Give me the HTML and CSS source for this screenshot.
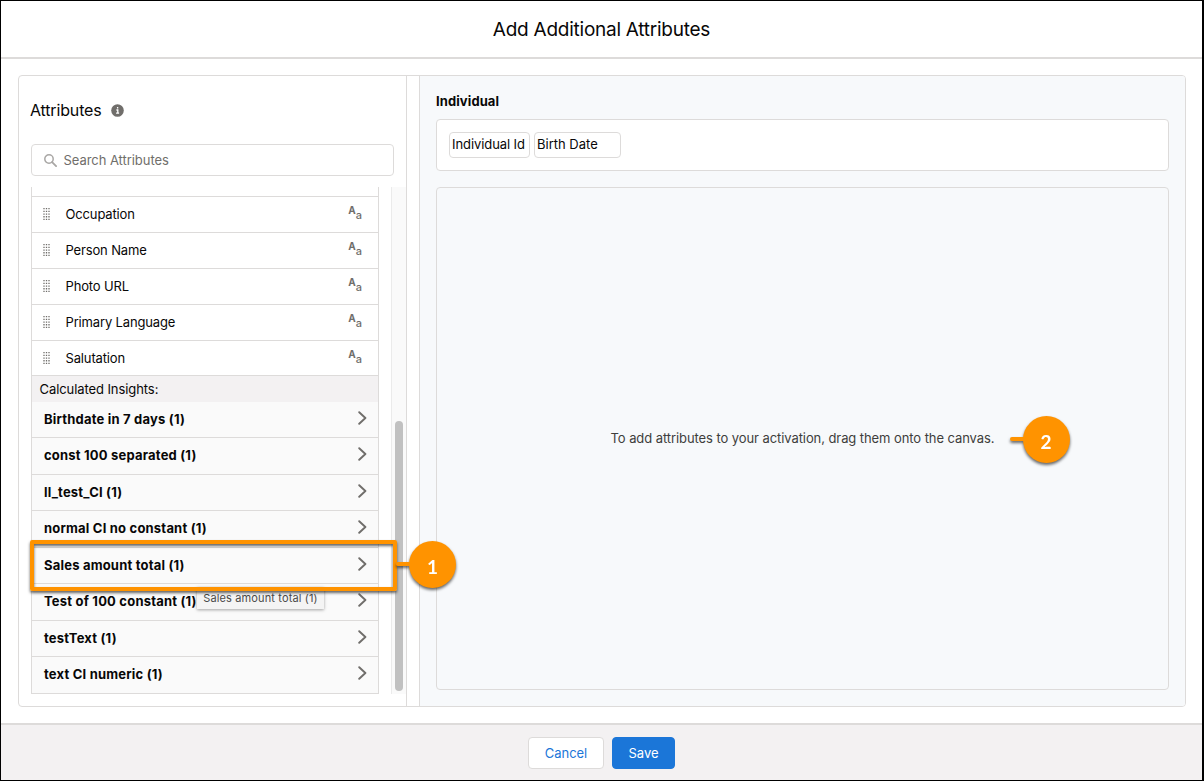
FILE: index.html
```html
<!DOCTYPE html>
<html lang="en">
<head>
    <meta charset="UTF-8">
    <meta name="viewport" content="width=device-width, initial-scale=1.0">
    <title>Add Additional Attributes</title>
    <link rel="stylesheet" href="styles.css">
</head>
<body>
    <!-- shared icons -->
    <svg class="sprite">
        <symbol id="grip" viewBox="0 0 7 13">
            <path d="M1 1v12M3.5 1v12M6 1v12" stroke="#706e6b" stroke-width="1.3" stroke-dasharray="1.3 1.4"/>
        </symbol>
        <symbol id="chevron" viewBox="0 0 9 14">
            <path d="M1.2 1.2 7.4 7l-6.2 5.8" fill="none" stroke="#706e6b" stroke-width="1.9" stroke-linecap="round" stroke-linejoin="round"/>
        </symbol>
    </svg>

    <div class="modal">
        <header class="modal-header">
            <h1>Add Additional Attributes</h1>
        </header>

        <main class="modal-body">
            <div class="panel">
                <section class="attributes">
                    <div class="attributes-title">
                        <h2>Attributes</h2>
                        <svg class="info" viewBox="0 0 13 13">
                            <circle cx="6.5" cy="6.5" r="6.3" fill="#706e6b"/>
                            <path d="M6.6 3v1.6M5.4 6h1.4v3M5.1 9.2h3" fill="none" stroke="#fff" stroke-width="1.3"/>
                        </svg>
                    </div>
                    <div class="search">
                        <svg viewBox="0 0 13 13">
                            <circle cx="5" cy="5" r="4.2" fill="none" stroke="#a9a7a5" stroke-width="1.5"/>
                            <path d="M8.1 8.1l4 4" stroke="#a9a7a5" stroke-width="1.8" stroke-linecap="round"/>
                        </svg>
                        <span>Search Attributes</span>
                    </div>
                    <div class="scroller">
                        <div class="list">
                            <div class="row row-cut"></div>
                            <div class="row"><svg class="grip"><use href="#grip"/></svg><span>Occupation</span><span class="type"><b>A</b><i>a</i></span></div>
                            <div class="row"><svg class="grip"><use href="#grip"/></svg><span>Person Name</span><span class="type"><b>A</b><i>a</i></span></div>
                            <div class="row"><svg class="grip"><use href="#grip"/></svg><span>Photo URL</span><span class="type"><b>A</b><i>a</i></span></div>
                            <div class="row"><svg class="grip"><use href="#grip"/></svg><span>Primary Language</span><span class="type"><b>A</b><i>a</i></span></div>
                            <div class="row row-last"><svg class="grip"><use href="#grip"/></svg><span>Salutation</span><span class="type"><b>A</b><i>a</i></span></div>
                            <div class="group-label">Calculated Insights:</div>
                            <div class="insight"><span>Birthdate in 7 days (1)</span><svg class="chevron"><use href="#chevron"/></svg></div>
                            <div class="insight"><span>const 100 separated (1)</span><svg class="chevron"><use href="#chevron"/></svg></div>
                            <div class="insight"><span>ll_test_CI (1)</span><svg class="chevron"><use href="#chevron"/></svg></div>
                            <div class="insight"><span>normal CI no constant (1)</span><svg class="chevron"><use href="#chevron"/></svg></div>
                            <div class="insight selected">
                                <span>Sales amount total (1)</span><svg class="chevron"><use href="#chevron"/></svg>
                                <div class="tooltip">Sales amount total (1)</div>
                                <div class="highlight"></div>
                                <div class="callout callout-one"><div class="badge">1</div></div>
                            </div>
                            <div class="insight"><span>Test of 100 constant (1)</span><svg class="chevron"><use href="#chevron"/></svg></div>
                            <div class="insight"><span>testText (1)</span><svg class="chevron"><use href="#chevron"/></svg></div>
                            <div class="insight"><span>text CI numeric (1)</span><svg class="chevron"><use href="#chevron"/></svg></div>
                        </div>
                        <div class="track"><div class="thumb"></div></div>
                    </div>
                </section>

                <section class="canvas">
                    <h3>Individual</h3>
                    <div class="fields">
                        <span class="pill">Individual Id</span>
                        <span class="pill pill-wide">Birth Date</span>
                    </div>
                    <div class="dropzone">
                        <p>To add attributes to your activation, drag them onto the canvas.</p>
                        <div class="callout callout-two"><div class="badge">2</div></div>
                    </div>
                </section>
            </div>
        </main>

        <footer class="modal-footer">
            <button class="btn">Cancel</button>
            <button class="btn btn-brand">Save</button>
        </footer>
    </div>
</body>
</html>
```
FILE: styles.css
```css
* {
    box-sizing: border-box;
}
body {
    margin: 0;
    font-family: Inter, "Liberation Sans", sans-serif;
    font-size: 13px;
    color: #080707;
}
h1, h2, h3, p {
    margin: 0;
    font-weight: 400;
}
.sprite {
    display: none;
}
.modal {
    display: flex;
    flex-direction: column;
    height: 781px;
    border: 1px solid #000;
    border-right-width: 2px;
    background: #fff;
    overflow: hidden;
}
.modal-header {
    height: 58px;
    border-bottom: 2px solid #dddbda;
    display: flex;
    align-items: center;
    justify-content: center;
}
.modal-header h1 {
    font-size: 19px;
    letter-spacing: -0.25px;
}
.modal-body {
    flex: 1;
    padding: 16px 16px 16px 17px;
}
.panel {
    height: 632px;
    display: flex;
    gap: 12px;
    border: 1px solid #dddbda;
    border-radius: 4px;
    overflow: hidden;
}

/* left side */
.attributes {
    width: 388px;
    border-right: 1px solid #dddbda;
    padding: 24px 0 0 12px;
}
.attributes-title {
    display: flex;
    align-items: center;
    gap: 9px;
    height: 20px;
}
.attributes-title h2 {
    margin-left: -1px;
    font-size: 16px;
    letter-spacing: -0.15px;
}
.info {
    width: 13px;
    height: 13px;
}
.search {
    display: flex;
    align-items: center;
    gap: 7px;
    width: 363px;
    height: 32px;
    margin-top: 24px;
    padding-left: 11.5px;
    border: 1px solid #dddbda;
    border-radius: 4px;
    color: #706e6b;
    letter-spacing: -0.05px;
}
.search svg {
    width: 13px;
    height: 13px;
}
.scroller {
    display: flex;
    gap: 12px;
    height: 507px;
    margin-top: 11px;
}
.list {
    width: 348px;
    border: 1px solid #dddbda;
    border-width: 0 1px;
}
.row {
    display: flex;
    align-items: center;
    height: 36px;
    padding: 0 16px 1px 11px;
    border-bottom: 1px solid #dddbda;
    letter-spacing: -0.15px;
}
.row-cut {
    height: 10px;
}
.row-last {
    height: 35px;
    padding-bottom: 0;
}
.grip {
    width: 7px;
    height: 13px;
    margin: -2px 15.5px 0 0;
}
.type {
    display: flex;
    margin-left: auto;
    color: #706e6b;
    line-height: 12px;
    letter-spacing: 0;
}
.type b {
    font-size: 10px;
    font-weight: 700;
    margin-top: -3px;
}
.type i {
    font-style: normal;
    font-size: 11px;
    font-weight: 500;
    margin-top: 2px;
}
.group-label {
    height: 25.5px;
    line-height: 27px;
    padding-left: 7.5px;
    background: #f3f1f2;
    letter-spacing: -0.08px;
}
.insight {
    position: relative;
    display: flex;
    align-items: center;
    justify-content: space-between;
    height: 36.5px;
    padding: 0 12px 0.6px;
    border-bottom: 1px solid #dddbda;
    background: #fafafa;
    font-weight: 700;
    letter-spacing: 0.2px;
}
.selected {
    z-index: 2;
}
.chevron {
    width: 9px;
    height: 14px;
    margin: -2.5px -0.5px 0 0;
}
.track {
    width: 15px;
    border-left: 1px solid #ebebeb;
    background: #fafafa;
    padding: 234px 3px 0;
}
.thumb {
    width: 8px;
    height: 270px;
    border-radius: 4px;
    background: #c1c1c1;
}

/* right side */
.canvas {
    flex: 1;
    display: flex;
    flex-direction: column;
    padding: 16px;
    border-left: 1px solid #dddbda;
    background: #f7f9fb;
}
.canvas h3 {
    font-size: 13px;
    font-weight: 700;
    line-height: 18px;
    letter-spacing: 0.1px;
}
.fields {
    display: flex;
    gap: 4px;
    height: 52px;
    margin: 9px 0 16px;
    padding: 12px;
    border: 1px solid #dddbda;
    border-radius: 4px;
    background: #fff;
}
.pill {
    width: 81px;
    height: 26px;
    padding-left: 2px;
    border: 1px solid #dddbda;
    border-radius: 4px;
    line-height: 23px;
    letter-spacing: -0.08px;
    white-space: nowrap;
}
.pill-wide {
    width: 87px;
    letter-spacing: 0;
}
.dropzone {
    position: relative;
    flex: 1;
    display: flex;
    align-items: center;
    justify-content: center;
    padding-bottom: 2px;
    border: 1px solid #dddbda;
    border-radius: 4px;
    color: #3e3e3c;
}
.dropzone p {
    letter-spacing: -0.08px;
}

/* overlays */
.tooltip {
    position: absolute;
    left: 165px;
    top: 39px;
    width: 127px;
    height: 22px;
    line-height: 22px;
    text-align: center;
    background: #f4f4f4;
    box-shadow: 0 1px 3px rgba(0, 0, 0, 0.35);
    color: #4a4a4a;
    font-size: 11px;
    font-weight: 400;
    letter-spacing: 0.14px;
}
.highlight {
    position: absolute;
    left: -2px;
    top: -8px;
    width: 367px;
    height: 51px;
    border: 4px solid #ff9300;
    border-radius: 2px;
    box-shadow: 0 2px 3px rgba(0, 0, 0, 0.6), inset 0 2px 3px rgba(0, 0, 0, 0.6);
}
.callout {
    position: absolute;
    display: flex;
    align-items: center;
    filter: drop-shadow(0 2px 1.5px rgba(0, 0, 0, 0.6));
}
.callout::before {
    content: "";
    width: 14px;
    height: 4px;
    margin-right: -1px;
    border-radius: 2px 0 0 2px;
    background: #ff9300;
}
.callout-one {
    left: 364px;
    top: -7px;
}
.callout-two {
    left: 572.5px;
    top: 227.5px;
}
.badge {
    width: 47px;
    height: 47px;
    border-radius: 50%;
    background: #ff9300;
    color: #fff;
    font: 700 19px/52px Lato, sans-serif;
    letter-spacing: 0;
    text-align: center;
}

/* footer */
.modal-footer {
    display: flex;
    justify-content: center;
    gap: 8px;
    height: 57px;
    padding-top: 12px;
    border-top: 2px solid #dddbda;
    background: #f3f1f2;
}
.btn {
    width: 76px;
    height: 32px;
    padding: 0;
    border: 1px solid #dddbda;
    border-radius: 4px;
    background: #fff;
    color: #1b76d8;
    font-family: inherit;
    font-size: 13px;
    letter-spacing: -0.05px;
}
.btn-brand {
    width: 63px;
    border-color: #1b76d8;
    background: #1b76d8;
    color: #fff;
}
```
